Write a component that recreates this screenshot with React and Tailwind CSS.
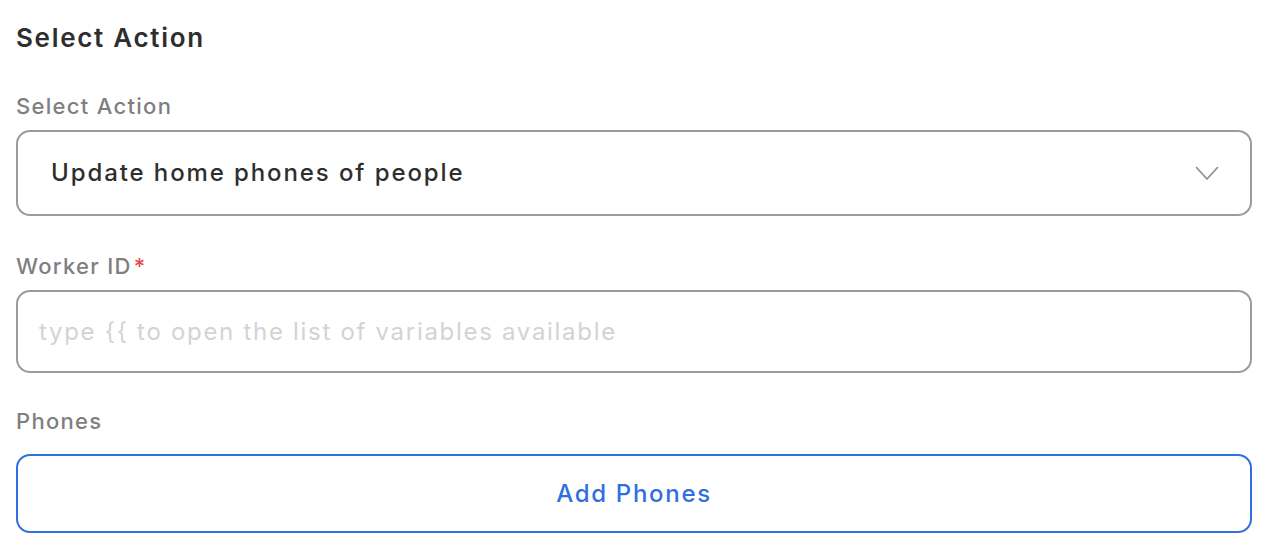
const font = { fontFamily: "Inter, 'Noto Sans', sans-serif" };

function Label({ children, required }) {
  return (
    <div className="flex h-[24px] items-center text-[22px] font-medium leading-none tracking-[1.3px] text-[#7f7f7f]">
      {children}
      {required && <span className="ml-[2px] text-[#e5484d]">*</span>}
    </div>
  );
}

export default function App() {
  return (
    <div className="min-h-screen bg-white px-[16px] pt-[23px]" style={font}>
      <h1 className="text-[26px] font-semibold leading-[30px] tracking-[1.7px] text-[#2e2e2e]">Select Action</h1>

      <div className="mt-[41px]">
        <Label>Select Action</Label>
        <button className="mt-[12px] flex h-[86px] w-full items-center justify-between rounded-[14px] border-2 border-[#9b9b9b] pl-[33px] pr-[31px] text-left">
          <span className="text-[24px] font-medium tracking-[1.9px] text-[#2e2e2e]">Update home phones of people</span>
          <svg width="24" height="15" viewBox="0 0 24 15" fill="none" stroke="#8a8a8a" strokeWidth="1.6" strokeLinecap="round" strokeLinejoin="round">
            <polyline points="1.5,1.5 12,13 22.5,1.5" />
          </svg>
        </button>
      </div>

      <div className="mt-[38px]">
        <Label required>Worker ID</Label>
        <div className="mt-[12px] flex h-[83px] w-full items-center rounded-[14px] border-2 border-[#9b9b9b] pl-[21px]">
          <span className="text-[24px] tracking-[1.7px] text-[#d3d3d3]">type {"{{"} to open the list of variables available</span>
        </div>
      </div>

      <div className="mt-[36px]">
        <Label>Phones</Label>
        <button className="mt-[21px] flex h-[79px] w-full items-center justify-center rounded-[14px] border-2 border-[#2f6fe0] text-[24px] font-medium tracking-[1.7px] text-[#2f6fe0]">
          Add Phones
        </button>
      </div>
    </div>
  );
}
